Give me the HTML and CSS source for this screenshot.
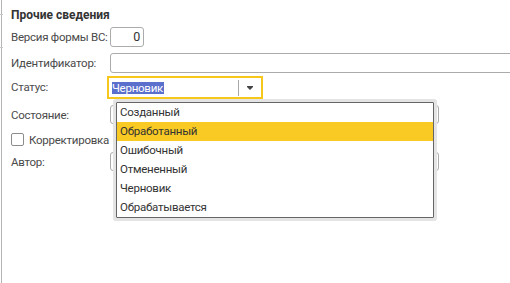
FILE: index.html
```html
<!DOCTYPE html>
<html lang="ru">
<head>
  <meta charset="UTF-8">
  <title>Прочие сведения</title>
  <link rel="stylesheet" href="styles.css">
</head>
<body>
  <div class="page">
    <div class="edge">
      <div class="tick tick-1"></div>
      <div class="tick tick-2"></div>
    </div>
    <div class="form">
      <h3 class="title">Прочие сведения</h3>
      <div class="row row-version">
        <label class="label">Версия формы ВС:</label>
        <div class="field field-short">0</div>
      </div>
      <div class="row row-id">
        <label class="label">Идентификатор:</label>
        <div class="field field-wide"></div>
      </div>
      <div class="row row-status">
        <label class="label label-status">Статус:</label>
        <div class="combo">
          <span class="combo-value"><span class="selected">Черновик</span></span>
          <span class="combo-btn"><span class="arrow"></span></span>
          <ul class="dropdown">
            <li>Созданный</li>
            <li class="active">Обработанный</li>
            <li>Ошибочный</li>
            <li>Отмененный</li>
            <li>Черновик</li>
            <li>Обрабатывается</li>
          </ul>
        </div>
      </div>
      <div class="row row-state">
        <label class="label">Состояние:</label>
        <div class="field field-mid"></div>
      </div>
      <div class="row row-check">
        <span class="checkbox"></span>
        <span class="check-text">Корректировка исправления</span>
      </div>
      <div class="row row-author">
        <label class="label">Автор:</label>
        <div class="field field-mid"></div>
      </div>
    </div>
  </div>
</body>
</html>
```

FILE: styles.css
```css
body {
  margin: 0;
  background: #fff;
  font-family: Roboto, 'Liberation Sans', Arial, sans-serif;
  font-size: 11.5px;
  letter-spacing: -0.25px;
  color: #4a4a4a;
}
.page {
  display: flex;
  height: 283px;
  width: 510px;
  overflow: hidden;
}
.edge {
  width: 1px;
  flex: none;
  border-right: 1px solid #b4b4b4;
  display: flex;
  flex-direction: column;
}
.tick {
  width: 3px;
  height: 1px;
  background: #c8c8c8;
}
.tick-1 {
  margin-top: 14px;
}
.tick-2 {
  margin-top: 32px;
}
.form {
  flex: 1;
  padding-left: 9px;
  min-width: 0;
}
.title {
  margin: 0 0 4px 0;
  padding-top: 7px;
  font-size: 12px;
  line-height: 16px;
  font-weight: bold;
  letter-spacing: 0;
  color: #333;
}
.row {
  display: flex;
  align-items: flex-start;
}
.label {
  width: 99px;
  flex: none;
  line-height: 20px;
  white-space: nowrap;
}
.row-version {
  height: 26px;
}
.row-id {
  height: 23px;
}
.row-status {
  height: 29px;
}
.row-state {
  height: 22px;
}
.row-check {
  height: 25px;
  align-items: center;
}
.row-author {
  height: 24px;
}
.field {
  height: 20px;
  box-sizing: border-box;
  border: 1px solid #ababab;
  border-radius: 3px;
  background: #fff;
  flex: none;
}
.field-short {
  width: 34px;
  text-align: right;
  padding-right: 3px;
  line-height: 18px;
  font-size: 12.5px;
  color: #333;
}
.field-wide {
  width: 420px;
}
.field-mid {
  width: 329px;
  height: 19px;
}
.label-status {
  width: 96px;
  line-height: 23px;
}
.combo {
  position: relative;
  width: 156px;
  height: 23px;
  box-sizing: border-box;
  border: 2px solid #f7c71c;
  display: flex;
  align-items: center;
  z-index: 2;
}
.combo-value {
  flex: 1;
  padding-left: 3px;
}
.selected {
  background: #5b6fcc;
  color: #fff;
  line-height: 12px;
  display: inline-block;
  padding-right: 1px;
}
.combo-btn {
  width: 22px;
  height: 16px;
  border-left: 1px solid #a8a8a8;
  display: flex;
  align-items: center;
  justify-content: center;
}
.arrow {
  width: 0;
  height: 0;
  border-left: 3px solid transparent;
  border-right: 3px solid transparent;
  border-top: 3px solid #444;
  position: relative;
  top: 1px;
}
.arrow::before {
  content: "";
  position: absolute;
  left: -3px;
  top: -4px;
  width: 6px;
  height: 1px;
  background: #444;
}
.dropdown {
  position: absolute;
  left: 7px;
  top: 24px;
  width: 318px;
  margin: 0;
  padding: 0;
  list-style: none;
  box-sizing: border-box;
  border: 1px solid #666;
  background: #fff;
  box-shadow: 0 0 0 3px #e4e4e4;
  border-radius: 1px;
}
.dropdown li {
  height: 19px;
  line-height: 19px;
  padding-left: 3px;
  color: #333;
}
.dropdown li.active {
  background: #f9ca24;
}
.checkbox {
  width: 13px;
  height: 13px;
  box-sizing: border-box;
  border: 1px solid #8c8c8c;
  border-radius: 2px;
  margin-right: 5px;
  flex: none;
}
.check-text {
  white-space: nowrap;
  width: 82px;
  overflow: hidden;
}
```
